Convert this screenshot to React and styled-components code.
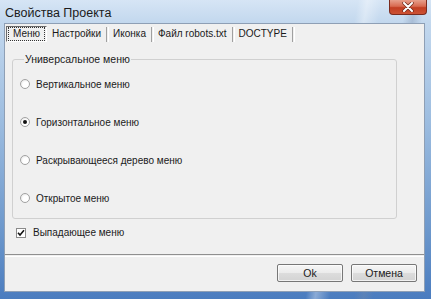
import React from "react";
import styled, { createGlobalStyle } from "styled-components";

const Global = createGlobalStyle`
  html, body { margin: 0; padding: 0; }
  body { width: 431px; height: 299px; overflow: hidden; background: #6f97c8; }
`;

const Window = styled.div`
  width: 431px;
  height: 299px;
  box-sizing: border-box;
  display: flex;
  flex-direction: column;
  padding: 0 6px 7px 4px;
  background:
    linear-gradient(100deg, transparent 0 74%, rgba(255,255,255,0.35) 76%, transparent 79% 84%, rgba(120,140,170,0.35) 86%, transparent 88%),
    linear-gradient(180deg, #d6e5f5 0px, #c3d8ee 22px, #9dbde0 120px, #6d98cc 230px, #4a7cbf 299px);
  font-family: "Liberation Sans", Arial, sans-serif;
`;

const TitleBar = styled.div`
  height: 23px;
  flex: none;
  display: flex;
  align-items: flex-start;
  justify-content: space-between;
`;

const Title = styled.div`
  margin: 6px 0 0 1px;
  font-family: "Liberation Sans", Arial, sans-serif;
  font-size: 12.5px;
  color: #1b1b1b;
`;

const CloseButton = styled.div`
  width: 38px;
  height: 15px;
  margin-right: -2px;
  box-sizing: border-box;
  border: 1px solid #7a2b1e;
  border-top: none;
  border-radius: 0 0 4px 4px;
  background: linear-gradient(180deg, #e7a08c 0%, #d86a50 45%, #c23e22 55%, #cc5234 100%);
  display: flex;
  align-items: center;
  justify-content: center;
`;

const Client = styled.div`
  flex: 1;
  box-sizing: border-box;
  background: #f0f0f0;
  border: 1px solid #8e9fb5;
  display: flex;
  flex-direction: column;
  color: #1a1a1a;
  font-size: 10px;
`;

const TabRow = styled.div`
  display: flex;
  align-items: center;
  height: 18px;
  padding: 1px 0 0 1px;
`;

const Tab = styled.div`
  height: 16px;
  box-sizing: border-box;
  padding: 0 ${p => (p.$active ? 2 : 5)}px 0 ${p => (p.$active ? 2 : 4)}px;
  display: flex;
  align-items: center;
  border: ${p => (p.$active ? "1px solid" : "none")};
  border-color: #6a6a6a #ffffff #ffffff #6a6a6a;
  margin-right: ${p => (p.$active ? 1 : 0)}px;
`;

const TabLabel = styled.span`
  outline: ${p => (p.$focus ? "1px dotted #333" : "none")};
  padding: 0 ${p => (p.$focus ? 4 : 0)}px;
  line-height: 12px;
  font-size: 10px;
`;

const TabSep = styled.div`
  width: 1px;
  height: 15px;
  border-left: 1px solid #a0a0a0;
  border-right: 1px solid #ffffff;
`;

const Page = styled.div`
  flex: 1;
  display: flex;
  flex-direction: column;
  padding: 10px 27px 0 7px;
`;

const GroupBox = styled.fieldset`
  margin: 0;
  height: 166px;
  box-sizing: border-box;
  border: 1px solid #d0d0d0;
  border-radius: 3px;
  padding: 0 0 0 7px;
  display: flex;
  flex-direction: column;
`;

const Legend = styled.legend`
  padding: 0 1px;
  margin-left: 4px;
  font-size: 10.5px;
  color: #1a1a1a;
`;

const RadioRow = styled.label`
  display: flex;
  align-items: center;
  gap: 6px;
  height: 38px;
  flex: none;
`;

const RadioCircle = styled.span`
  width: 10px;
  height: 10px;
  box-sizing: border-box;
  border-radius: 50%;
  border: 1px solid #a2a2a2;
  background: radial-gradient(circle at 60% 60%, #ffffff 0 40%, #dedede 100%);
  display: flex;
  align-items: center;
  justify-content: center;
  &::after {
    content: "";
    width: 4px;
    height: 4px;
    border-radius: 50%;
    background: ${p => (p.$checked ? "#111" : "transparent")};
  }
`;

const CheckRow = styled.label`
  display: flex;
  align-items: center;
  gap: 7px;
  margin: 8px 0 0 4px;
`;

const CheckBox = styled.span`
  width: 10px;
  height: 10px;
  box-sizing: border-box;
  border: 1px solid #8a8a8a;
  background: #fff;
  display: flex;
  align-items: center;
  justify-content: center;
`;

const Separator = styled.div`
  flex: none;
  height: 1px;
  border-top: 1px solid #8f8f8f;
  border-bottom: 1px solid #ffffff;
`;

const ButtonRow = styled.div`
  flex: none;
  height: 34px;
  display: flex;
  justify-content: flex-end;
  align-items: flex-start;
  gap: 8px;
  padding: 7px 7px 0 0;
  box-sizing: border-box;
`;

const Button = styled.div`
  width: 66px;
  height: 18px;
  box-sizing: border-box;
  border: 1px solid #777;
  border-radius: 2px;
  background: linear-gradient(180deg, #f6f6f6 0%, #ebebeb 48%, #dcdcdc 52%, #d3d3d3 100%);
  box-shadow: inset 0 0 0 1px rgba(255,255,255,0.7);
  display: flex;
  align-items: center;
  justify-content: center;
  font-size: 10.5px;
  color: #1a1a1a;
`;

const tabs = ["Меню", "Настройки", "Иконка", "Файл robots.txt", "DOCTYPE"];
const radios = [
  { label: "Вертикальное меню", checked: false },
  { label: "Горизонтальное меню", checked: true },
  { label: "Раскрывающееся дерево меню", checked: false },
  { label: "Открытое меню", checked: false },
];

export default function App() {
  return (
    <>
      <Global />
      <Window>
        <TitleBar>
          <Title>Свойства Проекта</Title>
          <CloseButton>
            <svg width="12" height="10" viewBox="0 0 12 10">
              <path d="M2 1 L10 9 M10 1 L2 9" stroke="#6b2a1c" strokeWidth="3.4" strokeLinecap="round" />
              <path d="M2 1 L10 9 M10 1 L2 9" stroke="#ffffff" strokeWidth="2" strokeLinecap="round" />
            </svg>
          </CloseButton>
        </TitleBar>
        <Client>
          <TabRow>
            {tabs.map((t, i) => (
              <React.Fragment key={t}>
                <Tab $active={i === 0}>
                  <TabLabel $focus={i === 0}>{t}</TabLabel>
                </Tab>
                {i > 0 && <TabSep />}
              </React.Fragment>
            ))}
          </TabRow>
          <Page>
            <GroupBox>
              <Legend>Универсальное меню</Legend>
              {radios.map(r => (
                <RadioRow key={r.label}>
                  <RadioCircle $checked={r.checked} />
                  {r.label}
                </RadioRow>
              ))}
            </GroupBox>
            <CheckRow>
              <CheckBox>
                <svg width="8" height="8" viewBox="0 0 8 8">
                  <path d="M1 3.8 L3 6 L7 1.3" stroke="#111" strokeWidth="1.6" fill="none" />
                </svg>
              </CheckBox>
              Выпадающее меню
            </CheckRow>
          </Page>
          <Separator />
          <ButtonRow>
            <Button>Ok</Button>
            <Button>Отмена</Button>
          </ButtonRow>
        </Client>
      </Window>
    </>
  );
}
